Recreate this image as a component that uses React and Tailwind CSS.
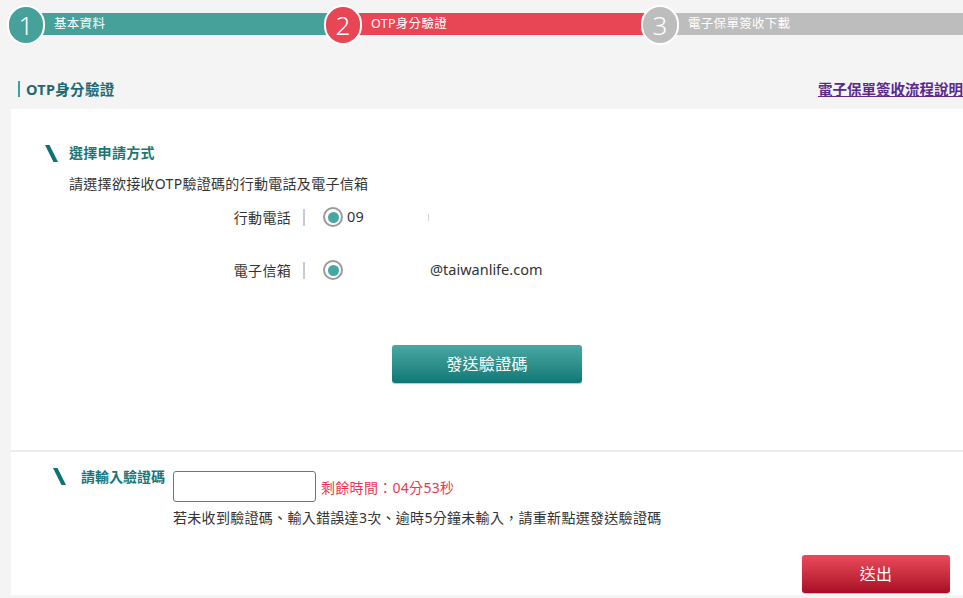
import React from "react";

const FONT = {
  fontFamily: '"Noto Sans", "Noto Sans CJK TC", sans-serif',
};

const steps = [
  { no: 1, label: "基本資料", bar: "bg-[#46a19b]" },
  { no: 2, label: "OTP身分驗證", bar: "bg-[#e84555]" },
  { no: 3, label: "電子保單簽收下載", bar: "bg-[#bdbdbd]" },
];

const Slash = ({ className = "" }) => (
  <svg width="13" height="17" viewBox="0 0 13 17" className={className}>
    <polygon points="0,0 4.5,0 13,17 8.5,17" fill="#0f7272" />
  </svg>
);

const Radio = () => (
  <span className="flex h-[20px] w-[20px] items-center justify-center rounded-full border-2 border-[#9a9a9a] bg-white">
    <span className="h-[11px] w-[11px] rounded-full bg-[#46a8a2]" />
  </span>
);

const Stepper = () => (
  <div className="flex pl-[7px] pt-[5px]">
    {steps.map((s, i) => (
      <div
        key={s.no}
        className={`relative h-[40px] ${i === steps.length - 1 ? "flex-1" : "w-[317px] shrink-0"}`}
      >
        {/* bar runs under the next circle */}
        <div
          className={`absolute top-[8px] left-[19px] h-[22px] ${s.bar} ${i === steps.length - 1 ? "right-0" : "right-[-20px]"}`}
        />
        <div className="relative z-10 flex h-full items-start">
          <div
            className={`flex h-[40px] w-[38px] shrink-0 items-center justify-center rounded-full border-2 border-white ${s.bar} text-[26px] font-light leading-none text-white`}
          >
            {s.no}
          </div>
          <span className="ml-[9px] mt-[10px] text-[12.5px] leading-[18px] text-white">
            {s.label}
          </span>
        </div>
      </div>
    ))}
  </div>
);

export default function App() {
  return (
    <div
      className="min-h-screen w-full overflow-hidden bg-[#f4f4f4] text-[14px] tracking-[0.3px] text-[#333]"
      style={FONT}
    >
      <div className="w-[963px]">
        <Stepper />

        {/* page title */}
        <div className="flex items-center justify-between pt-[34px] pb-[10px]">
          <div className="ml-[18px] flex items-center">
            <span className="h-[16px] w-[2px] bg-[#3ba0a6]" />
            <span className="ml-[6px] text-[14.5px] font-bold leading-[20px] text-[#1d6a72]">
              OTP身分驗證
            </span>
          </div>
          <a
            href="#"
            className="text-[14.5px] font-bold leading-[20px] tracking-normal text-[#5a2a8c] underline"
          >
            電子保單簽收流程說明
          </a>
        </div>

        <div className="ml-[11px] bg-white">
          {/* section: choose method */}
          <div className="pl-[34px] pt-[34px] pb-[67px]">
            <div className="flex items-center gap-[11px]">
              <Slash />
              <span className="font-bold leading-[20px] text-[#1b7676]">選擇申請方式</span>
            </div>
            <p className="ml-[24px] mt-[11px] leading-[20px]">
              請選擇欲接收OTP驗證碼的行動電話及電子信箱
            </p>

            <div className="ml-[24px] mt-[11px] flex h-[24px] items-center">
              <span className="w-[222px] text-right">行動電話</span>
              <span className="ml-[12px] h-[17px] w-[2px] bg-[#c6cad2]" />
              <span className="ml-[18px]">
                <Radio />
              </span>
              <span className="ml-[4px] text-[14.5px]">09</span>
              <span className="ml-[64px] h-[7px] w-[1px] bg-[#cfd8e0]" />
            </div>

            <div className="ml-[24px] mt-[29px] flex h-[24px] items-center">
              <span className="w-[222px] text-right">電子信箱</span>
              <span className="ml-[12px] h-[17px] w-[2px] bg-[#c6cad2]" />
              <span className="ml-[18px]">
                <Radio />
              </span>
              <span className="ml-[87px] text-[14.5px] tracking-normal">@taiwanlife.com</span>
            </div>

            <div className="mt-[63px] flex justify-center pr-[34px]">
              <button className="h-[38px] w-[190px] rounded-[3px] bg-gradient-to-b from-[#4aa8a3] to-[#0a7876] text-[16px] text-white shadow-[0_1px_1px_rgba(0,0,0,0.25)]">
                發送驗證碼
              </button>
            </div>
          </div>

          <div className="h-[2px] bg-[#ececec]" />

          {/* section: enter code */}
          <div className="pl-[42px] pt-[14px] pb-[2px]">
            <div className="flex items-start">
              <div className="flex w-[120px] items-start gap-[15px] pt-[1px]">
                <Slash className="mt-[1px]" />
                <span className="font-bold leading-[20px] tracking-normal text-[#1b7676]">請輸入驗證碼</span>
              </div>
              <div className="mt-[5px]">
                <div className="flex items-center">
                  <input
                    type="text"
                    className="h-[31px] w-[143px] rounded-[3px] border border-[#3a8e8e] bg-white px-2 outline-none"
                  />
                  <span className="ml-[5px] mt-[1px] text-[#e8384f]">剩餘時間：04分53秒</span>
                </div>
                <p className="mt-[6px] leading-[20px]">
                  若未收到驗證碼、輸入錯誤達3次、逾時5分鐘未輸入，請重新點選發送驗證碼
                </p>
              </div>
            </div>
            <div className="mt-[27px] flex justify-end pr-[13px]">
              <button className="h-[38px] w-[148px] rounded-[3px] bg-gradient-to-b from-[#ec4a5b] to-[#a80a24] text-[16px] text-white shadow-[0_1px_1px_rgba(0,0,0,0.25)]">
                送出
              </button>
            </div>
          </div>
        </div>
      </div>
    </div>
  );
}
